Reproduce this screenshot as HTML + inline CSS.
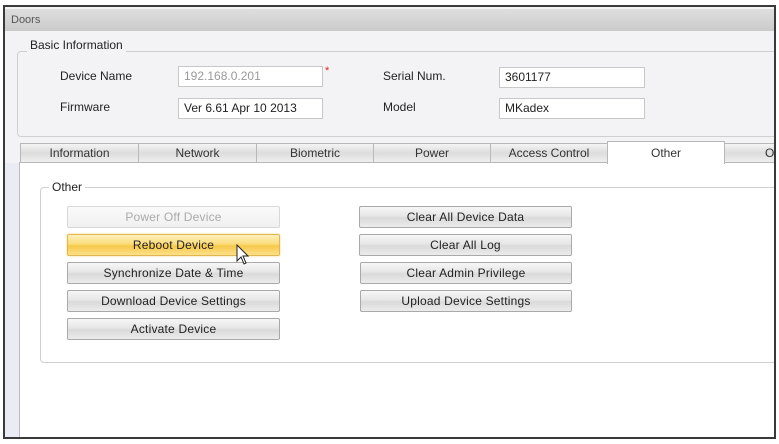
<!DOCTYPE html>
<html><head><style>
*{margin:0;padding:0;box-sizing:border-box}
body{width:779px;height:444px;background:#fff;position:relative;overflow:hidden;font-family:"Liberation Sans",sans-serif;font-size:12px;color:#222}
.abs{position:absolute}
#win{left:3px;top:5px;width:773px;height:434px;border:2px solid #3a3a3a;border-right-width:2px;background:#f3f3f5;overflow:hidden}
#title{left:0;top:2px;width:771px;height:22px;background:linear-gradient(#dedede,#cbcbcb);color:#555;font-size:11px;line-height:22px;padding-left:6px}
.grp{border:1px solid #cfcfcf;border-radius:4px}
.leg{background:#f3f3f5;padding:0 3px;line-height:14px}
.in{height:21px;border:1px solid #c8c8c8;background:#fff;line-height:19px;padding-left:5px}
.tab{top:136px;height:20px;border:1px solid #b8b8b8;background:linear-gradient(#f4f4f4,#dcdcdc 50%,#efefef);text-align:center;line-height:18px;color:#333}
.btn{width:213px;height:22px;border:1px solid #a9a9a9;border-radius:2px;background:linear-gradient(#f7f7f7,#e6e6e6 45%,#dadada 55%,#ececec);text-align:center;line-height:20px;color:#222;letter-spacing:0.2px}
</style></head><body>
<div id="win" class="abs">
 <div id="title" class="abs">Doors</div>
 <div class="abs grp" style="left:12px;top:44px;width:780px;height:86px"></div>
 <div class="abs leg" style="left:22px;top:31px">Basic Information</div>
 <div class="abs" style="left:55px;top:62px">Device Name</div>
 <div class="abs in" style="left:173px;top:59px;width:145px;color:#999">192.168.0.201</div>
 <div class="abs" style="left:320px;top:58px;color:#d22;font-size:11px">*</div>
 <div class="abs" style="left:55px;top:93px">Firmware</div>
 <div class="abs in" style="left:173px;top:91px;width:145px">Ver 6.61 Apr 10 2013</div>
 <div class="abs" style="left:378px;top:62px">Serial Num.</div>
 <div class="abs in" style="left:494px;top:60px;width:146px">3601177</div>
 <div class="abs" style="left:378px;top:93px">Model</div>
 <div class="abs in" style="left:494px;top:91px;width:146px">MKadex</div>

 <div class="abs" style="left:0;top:156px;width:14px;height:280px;background:#ebebf4"></div>
 <div class="abs" style="left:14px;top:155px;width:760px;height:280px;background:#fff;border:1px solid #bdbdbd;border-right:none;border-bottom:none"></div>
 <div class="abs tab" style="left:15px;width:119px">Information</div>
 <div class="abs tab" style="left:133px;width:119px">Network</div>
 <div class="abs tab" style="left:251px;width:118px">Biometric</div>
 <div class="abs tab" style="left:368px;width:118px">Power</div>
 <div class="abs tab" style="left:485px;width:118px">Access Control</div>
 <div class="abs tab" style="left:602px;top:134px;height:23px;width:118px;background:#fff;border-bottom:none;line-height:22px">Other</div>
 <div class="abs tab" style="left:719px;width:80px;text-align:left;padding-left:40px">Ot</div>

 <div class="abs grp" style="left:35px;top:180px;width:760px;height:176px"></div>
 <div class="abs" style="left:44px;top:173px;background:#fff;padding:0 3px;line-height:14px">Other</div>

 <div class="abs btn" style="left:62px;top:199px;color:#aaa;border-color:#d8d8d8;background:linear-gradient(#fafafa,#f0f0f0)">Power Off Device</div>
 <div class="abs btn" style="left:62px;top:227px;border-color:#e0b650;background:linear-gradient(#fef0bd,#fbdc7c 45%,#f6c94a 55%,#fde08a);box-shadow:0 0 2px #f5d58a">Reboot Device</div>
 <div class="abs btn" style="left:62px;top:255px">Synchronize Date &amp; Time</div>
 <div class="abs btn" style="left:62px;top:283px">Download Device Settings</div>
 <div class="abs btn" style="left:62px;top:311px">Activate Device</div>
 <div class="abs btn" style="left:354px;top:199px">Clear All Device Data</div>
 <div class="abs btn" style="left:354px;top:227px">Clear All Log</div>
 <div class="abs btn" style="left:355px;top:255px;width:212px">Clear Admin Privilege</div>
 <div class="abs btn" style="left:355px;top:283px;width:212px">Upload Device Settings</div>
 <svg class="abs" style="left:231px;top:237px" width="14" height="22" viewBox="0 0 14 22"><path d="M1 1 L1 17 L5 13 L8 20 L10 19 L7 12 L12 12 Z" fill="#fff" stroke="#222" stroke-width="1"/></svg>
</div>
</body></html>
